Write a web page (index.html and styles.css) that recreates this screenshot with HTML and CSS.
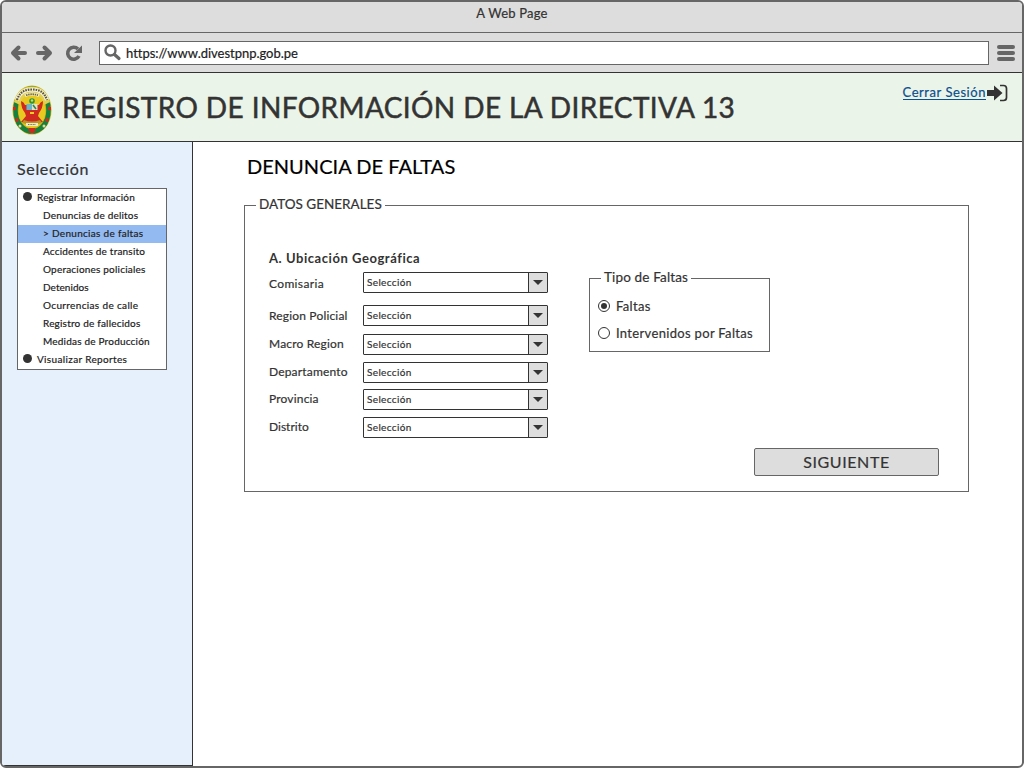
FILE: index.html
```html
<!DOCTYPE html>
<html lang="es">
<head>
<meta charset="utf-8">
<title>A Web Page</title>
<link rel="stylesheet" href="styles.css">
</head>
<body>
<div class="window">
  <div class="titlebar"><span>A Web Page</span></div>
  <div class="toolbar">
    <svg class="nav-icons" width="76" height="18" viewBox="0 0 76 18">
      <g fill="none" stroke="#666" stroke-width="4" stroke-linecap="round" stroke-linejoin="round">
        <path d="M8.500 3.500 3 9l5.500 5.500M4 9h11"/>
        <path d="M34.500 3.500 40 9l-5.500 5.500M39 9H28"/>
        <path d="M68 5A6 6 0 1 0 69 12" stroke-width="3.600" stroke-linecap="butt"/>
      </g>
      <path d="M72 1.500V9h-8z" fill="#666"/>
    </svg>
    <div class="address">
      <svg width="18" height="18" viewBox="0 0 18 18" fill="none" stroke="#666"><circle cx="6.500" cy="6.500" r="5" stroke-width="2.400"/><path d="m10.500 10.500 4.500 4" stroke-width="3.200" stroke-linecap="round"/></svg>
      <span>https://www.divestpnp.gob.pe</span>
    </div>
    <div class="menu"><i></i><i></i><i></i></div>
  </div>
  <header class="banner">
    <svg class="crest" width="40" height="50" viewBox="0 0 40 50">
      <ellipse cx="20" cy="25" rx="19.500" ry="24.500" fill="#c9ad18"/>
      <ellipse cx="20" cy="25" rx="16.500" ry="21.500" fill="none" stroke="#16803c" stroke-width="4.500"/>
      <path d="M2 17C5 5 12 1.500 20 1.500S35 5 38 17l-6 3C29 12 25 10 20 10S11 12 8 20z" fill="#e3cf50"/>
      <path d="M5 15C8 6 14 4.500 20 4.500s12 1.500 15 10.500" fill="none" stroke="#f3efd6" stroke-width="4"/>
      <path d="M5 15C8 6 14 4.500 20 4.500s12 1.500 15 10.500" fill="none" stroke="#5b5638" stroke-width="2.200" stroke-dasharray="1.600 1"/>
      <ellipse cx="20" cy="26" rx="13.500" ry="17" fill="#e7c91f"/>
      <path d="M13 10.500q7-3 14 0" fill="none" stroke="#f3efd6" stroke-width="3"/>
      <path d="M14 10.200q6-2 12 0" fill="none" stroke="#6d683f" stroke-width="1.800" stroke-dasharray="1.500 .7"/>
      <path d="M9 16q3 1 4 4h14q1-3 4-4 0 7-4 12l-1 3 5 6H9l5-6-1-3Q9 23 9 16z" fill="#d02a20"/>
      <circle cx="20" cy="16" r="2.800" fill="#24964f"/><circle cx="20" cy="15.500" r="1.200" fill="#e7d72f"/>
      <path d="M14.500 19H20v6h-5.500z" fill="#6fb5c9"/><path d="M20 19h5.500v6H20z" fill="#e3e5c8"/>
      <path d="m21 20 3 4" stroke="#2d8650" stroke-width="1.600"/><path d="M18 27h4v2h-4z" fill="#f0ce29"/>
      <path d="M12 35q8 3 16 0l2 3q-10 3-20 0z" fill="#b89725"/>
      <path d="M14 38h12v3H14z" fill="#eee9c7"/><path d="M16 39.500h8" stroke="#77714b" stroke-dasharray="1 .6"/>
      <path d="M5 34q2 10 14 13M35 34q-2 10-14 13" fill="none" stroke="#16803c" stroke-width="4"/>
      <path d="M16.500 43h7l-1 5h-5z" fill="#d02a20"/>
      <path d="M1 22h3v3H1zM36 22h3v3h-3zM3 34l3-1 1 3-3 1zM37 34l-3-1-1 3 3 1z" fill="#d02a20"/>
      <circle cx="8" cy="41" r="1.500" fill="#e7d79a"/><circle cx="32" cy="41" r="1.500" fill="#e7d79a"/>
    </svg>
    <h1>REGISTRO DE INFORMACIÓN DE LA DIRECTIVA 13</h1>
    <a class="logout"><span>Cerrar Sesión</span>
      <svg width="22" height="18" viewBox="0 0 22 18"><path d="M1 6h7V1.500L16.500 9 8 16.500V12H1z" fill="#333"/><path d="M14 1.500h3.500q3 0 3 3v9q0 3-3 3H14" fill="none" stroke="#333" stroke-width="1.700"/></svg>
    </a>
  </header>
  <div class="body">
    <aside class="sidebar">
      <h2>Selección</h2>
      <ul class="tree">
        <li class="root">Registrar Información</li>
        <li>Denuncias de delitos</li>
        <li class="active">&gt; Denuncias de faltas</li>
        <li>Accidentes de transito</li>
        <li>Operaciones policiales</li>
        <li class="tight">Detenidos</li>
        <li class="wide">Ocurrencias de calle</li>
        <li>Registro de fallecidos</li>
        <li>Medidas de Producción</li>
        <li class="root wide">Visualizar Reportes</li>
      </ul>
    </aside>
    <main class="content">
      <h2>DENUNCIA DE FALTAS</h2>
      <section class="group general">
        <h3 class="legend"><span>DATOS GENERALES</span></h3>
        <div class="columns">
          <div class="form">
            <h4>A. Ubicación Geográfica</h4>
            <div class="row first"><label>Comisaria</label><div class="select"><span>Selección</span><b></b></div></div>
            <div class="row second"><label>Region Policial</label><div class="select"><span>Selección</span><b></b></div></div>
            <div class="row"><label>Macro Region</label><div class="select"><span>Selección</span><b></b></div></div>
            <div class="row fourth"><label>Departamento</label><div class="select"><span>Selección</span><b></b></div></div>
            <div class="row"><label>Provincia</label><div class="select"><span>Selección</span><b></b></div></div>
            <div class="row last"><label class="tight">Distrito</label><div class="select"><span>Selección</span><b></b></div></div>
          </div>
          <section class="group types">
            <h3 class="legend"><span>Tipo de Faltas</span></h3>
            <div class="radio on"><i></i><span>Faltas</span></div>
            <div class="radio"><i></i><span>Intervenidos por Faltas</span></div>
          </section>
        </div>
        <button class="next">SIGUIENTE</button>
      </section>
    </main>
  </div>
</div>
</body>
</html>
```
FILE: styles.css
```css
* { box-sizing: border-box; }
body { margin: 0; background: #fff; font-family: Lato, "Liberation Sans", sans-serif; color: #333; font-size: 13px; -webkit-text-stroke: .2px; }
h1, h2, h3, h4, ul { margin: 0; padding: 0; font-weight: 400; }
.window { width: 1024px; height: 768px; border: 2px solid #666; border-radius: 6px; overflow: hidden; display: flex; flex-direction: column; white-space: nowrap; }
.titlebar { height: 31px; background: #ddd; border-bottom: 1px solid #666; text-align: center; line-height: 23px; letter-spacing: .2px; }
.toolbar { height: 40px; background: #ddd; border-bottom: 1px solid #333; display: flex; padding: 8px 7px 7px 8px; }
.nav-icons { margin: 3px 13px 0 0; }
.address { width: 890px; height: 24px; border: 1px solid #666; background: #fff; display: flex; align-items: center; padding-left: 4px; color: #222; letter-spacing: -.02px; }
.address span { margin-left: 4px; }
.menu { margin: 4px 0 0 8px; display: flex; flex-direction: column; gap: 2px; }
.menu i { width: 18px; height: 4px; border-radius: 2px; background: #666; }
.banner { height: 69px; background: #ebf4e8; border-bottom: 1px solid #333; display: flex; padding-left: 10px; }
.crest { margin-top: 12px; }
.banner h1 { font-size: 28px; line-height: 34px; margin: 17px 0 0 10px; letter-spacing: .4px; -webkit-text-stroke: .5px; }
.logout { margin: 11px 14px 0 auto; display: flex; color: #0b4f8f; }
.logout span { height: 16px; line-height: 17px; border-bottom: 1px solid #0b4f8f; letter-spacing: .55px; }
.body { flex: 1; display: flex; }
.sidebar { width: 191px; background: #e5f0fc; border-right: 1px solid #333; border-bottom: 1px solid #333; padding: 17px 0 0 15px; }
.sidebar h2 { font-size: 16px; line-height: 20px; letter-spacing: .65px; }
.tree { list-style: none; margin-top: 9px; width: 150px; height: 182px; border: 1px solid #666; background: #fff; font-size: 10px; color: #222; }
.tree li { height: 18px; line-height: 17px; padding-left: 25px; letter-spacing: .2px; }
.tree .root { padding-left: 5px; display: flex; }
.tree .root::before { content: ""; width: 9px; height: 9px; border-radius: 50%; background: #333; margin: 3px 5px 0 0; }
.tree .active { background: #94baf2; letter-spacing: .3px; }
.tree .wide { letter-spacing: .35px; }
.tree .tight { letter-spacing: .05px; }
.content { padding: 13px 0 0 51px; }
.content h2 { color: #000; font-size: 20px; line-height: 22px; margin-left: 3px; letter-spacing: .03px; }
.group { border: 1px solid #666; }
.general { width: 725px; height: 287px; margin-top: 28px; padding-right: 29px; }
.legend { height: 16px; line-height: 16px; margin: -10px 0 0 11px; font-size: 13.5px; }
.legend span { background: #fff; display: inline-block; padding: 0 3px; }
.columns { display: flex; margin-left: 24px; }
.form { width: 320px; padding-top: 38px; }
.form h4 { height: 17px; line-height: 17px; font-weight: 700; letter-spacing: .55px; -webkit-text-stroke: 0; }
.row { height: 21px; display: flex; margin-bottom: 7px; font-size: 12px; }
.row.first { margin: 5px 0 12px; }
.row.second { margin-bottom: 8px; }
.row.fourth { margin-bottom: 6px; }
.row.last { margin-bottom: 0; }
.row label { width: 94px; line-height: 20px; letter-spacing: .17px; }
.row .tight { letter-spacing: 0; }
.first label { padding-top: 2px; letter-spacing: .35px; }
.second label { padding-top: 1px; }
.select { width: 185px; height: 21px; border: 1px solid #333; border-radius: 1px; display: flex; justify-content: space-between; font-size: 10px; line-height: 19px; padding-left: 3px; letter-spacing: .35px; }
.select b { width: 19px; background: #ddd; border-left: 1px solid #333; display: grid; place-items: center; }
.select b::before { content: ""; border: 5px solid transparent; border-top-color: #333; border-bottom: 0; }
.types { width: 181px; height: 74px; margin-top: 66px; }
.types .legend { margin-bottom: 10px; letter-spacing: .15px; }
.radio { height: 27px; line-height: 22px; display: flex; padding-left: 8px; letter-spacing: .33px; }
.radio i { width: 12px; height: 12px; border: 1px solid #333; border-radius: 50%; margin: 5px 6px 0 0; display: grid; place-items: center; }
.radio.on i::before { content: ""; width: 6px; height: 6px; border-radius: 50%; background: #333; }
.next { display: block; width: 185px; height: 28px; margin: 10px 0 0 auto; padding: 0 0 2px; border: 1px solid #666; border-radius: 2px; background: #ddd; font: 16px Lato, sans-serif; color: #333; letter-spacing: .6px; }
```
